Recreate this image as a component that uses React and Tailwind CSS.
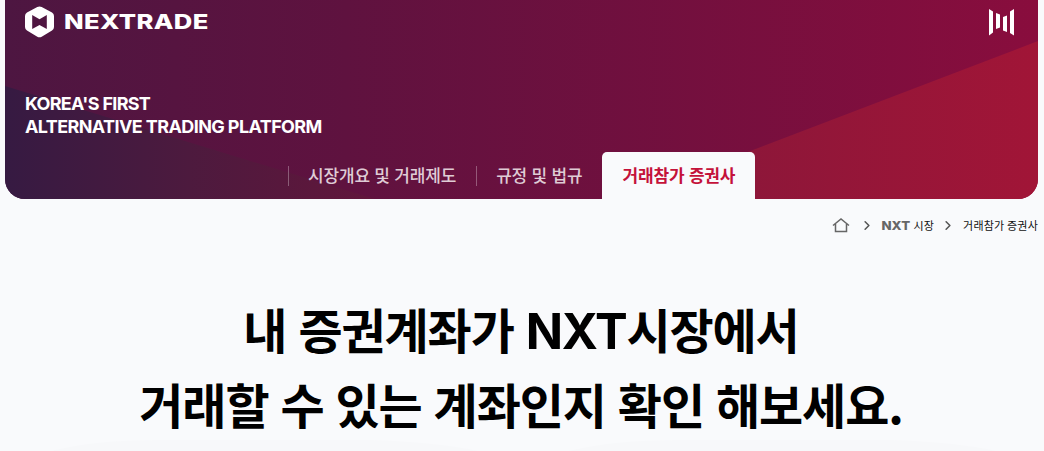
import React from 'react';
import { FiChevronRight } from 'react-icons/fi';

const menus = [
  { label: '시장개요 및 거래제도', active: false },
  { label: '규정 및 법규', active: false },
  { label: '거래참가 증권사', active: true },
];

const Logo = () => (
  <svg className="block" width="190" height="32" viewBox="0 0 190 32" fill="#fff">
    <path
      fillRule="evenodd"
      d="M12.3 1Q14.5 -.2 16.7 1L27 6.4Q29 7.6 29 10V21Q29 23.4 27 24.6L16.7 30.7Q14.5 31.8 12.3 30.7L2 24.6Q0 23.4 0 21V10Q0 7.6 2 6.4ZM7.2 9V23L14.5 19L21.8 23V9L14.5 13.2Z"
    />
    <text
      transform="translate(39 23.4) scale(1.25 1)"
      className="font-['Inter',sans-serif] text-[20.5px] font-extrabold"
      textLength="115.5"
      lengthAdjust="spacing"
    >
      NEXTRADE
    </text>
  </svg>
);

const MenuIcon = () => (
  <svg className="block" width="25" height="27" viewBox="0 0 25 27" fill="#fff">
    <path d="M0 0L4 2.5V23.5L0 26.5ZM7 4L11 5.5V18.5L7 20ZM14 8L18 6.5V23L14 21.5ZM21 2.5L25 0V26.5L21 24Z" />
  </svg>
);

const HeroBackground = () => (
  <svg className="absolute inset-0 size-full" viewBox="0 0 1033 199" preserveAspectRatio="none">
    <defs>
      <linearGradient id="base">
        <stop offset="0" stopColor="#4d1641" />
        <stop offset="0.33" stopColor="#5f123f" />
        <stop offset="1" stopColor="#890d3d" />
      </linearGradient>
      <linearGradient id="left">
        <stop offset="0" stopColor="#361a42" />
        <stop offset="0.5" stopColor="#4d1a3e" />
        <stop offset="1" stopColor="#62163b" />
      </linearGradient>
      <linearGradient id="right">
        <stop offset="0" stopColor="#85173a" />
        <stop offset="1" stopColor="#a11537" />
      </linearGradient>
    </defs>
    <path fill="url(#base)" d="M0 0H1033V199H0Z" />
    <path fill="url(#left)" d="M0 86L370 199H0Z" />
    <path fill="url(#right)" d="M1033 41V199H620Z" />
  </svg>
);

const Hero = () => (
  <header className="relative mr-[6px] ml-[5px] h-[199px] shrink-0 overflow-hidden rounded-b-[20px]">
    <HeroBackground />
    <div className="relative flex h-full flex-col">
      <div className="flex items-start justify-between pt-[6px] pr-6 pl-5">
        <Logo />
        <div className="pt-[3px]">
          <MenuIcon />
        </div>
      </div>
      <p className="mt-[54px] pl-5 font-['Inter',sans-serif] text-[18px] leading-[23px] font-bold text-white">
        <span className="block tracking-[-0.7px]">KOREA&apos;S FIRST</span>
        <span className="block tracking-[-0.6px]">ALTERNATIVE TRADING PLATFORM</span>
      </p>
      <nav className="mt-auto ml-[283px] flex h-[47px] items-stretch text-[17px] tracking-[-0.17px] [word-spacing:0.8px]">
        {menus.map((menu) =>
          menu.active ? (
            <a
              key={menu.label}
              className="flex w-[153px] items-center justify-center rounded-t-[5px] bg-[#f9fafc] pb-[2px] font-bold text-[#c4123a]"
            >
              {menu.label}
            </a>
          ) : (
            <a key={menu.label} className="flex items-center pr-5 font-medium text-[#dfcbd5]">
              <i className="mr-[19px] h-5 w-px bg-white/30" />
              <span className="pb-[2px]">{menu.label}</span>
            </a>
          )
        )}
      </nav>
    </div>
  </header>
);

const Breadcrumb = () => (
  <div className="mr-[6px] flex h-[53px] shrink-0 items-center justify-end text-[11px] tracking-[0.2px] text-[#111]">
    <svg className="mr-[9px]" width="18" height="16" viewBox="0 0 18 16" fill="none" stroke="#666" strokeWidth="1.5">
      <path d="M1 7.5L9 1L17 7.5M3.5 6V13.5H14.5V6" />
    </svg>
    <FiChevronRight className="mr-[6px] size-4 pb-px text-[#555]" strokeWidth={2.5} />
    <svg className="mr-[2px] overflow-visible" width="30" height="12" viewBox="0 0 30 12" fill="#666">
      <text
        transform="translate(0.5 10.2) scale(1.3 1)"
        className="font-['Inter',sans-serif] text-[11.5px] font-extrabold tracking-normal"
        textLength="22"
        lengthAdjust="spacingAndGlyphs"
      >
        NXT
      </text>
    </svg>
    <span>시장</span>
    <FiChevronRight className="mr-[7px] ml-[6px] size-4 pb-px text-[#555]" strokeWidth={2.5} />
    <span>거래참가 증권사</span>
  </div>
);

const App = () => {
  return (
    <div className="flex h-[451px] flex-col overflow-hidden bg-[#f9fafc] font-['Noto_Sans_CJK_KR',sans-serif]">
      <Hero />
      <Breadcrumb />
      <h1 className="mt-[39px] mr-[2px] text-center text-[48px] leading-[75px] font-bold tracking-[-1.1px] text-black [word-spacing:2.2px]">
        내 증권계좌가 <span className="font-['Inter',sans-serif] text-[49px] leading-none tracking-[-1.2px]">NXT</span>시장에서
        <br />
        거래할 수 있는 계좌인지 확인 해보세요.
      </h1>
      {/* top edge of the soft shapes under the title */}
      <svg className="-mt-[1px] block shrink-0" width="1044" height="12" viewBox="0 0 1044 12" fill="#f7f8fa">
        <path d="M48 12Q90 0 160 0H370Q440 2 482 12ZM565 12Q610 0 680 0H890Q960 2 1000 12Z" />
      </svg>
    </div>
  );
};

export default App;
